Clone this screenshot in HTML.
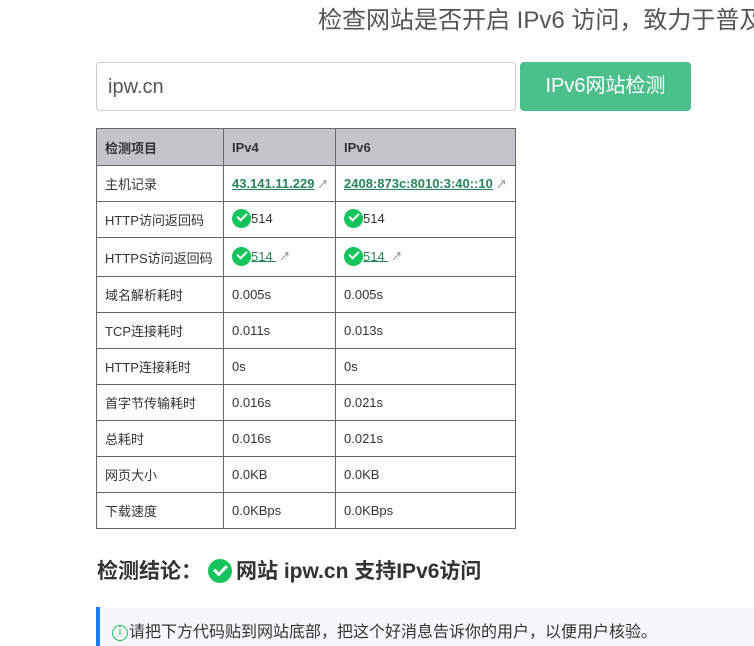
<!DOCTYPE html>
<html><head><meta charset="utf-8"><style>
*{margin:0;padding:0;box-sizing:border-box}
body{width:754px;height:646px;overflow:hidden;background:#fff;font-family:"Liberation Sans","Noto Sans CJK SC",sans-serif;color:#333;position:relative}
.title{position:absolute;left:318px;top:0px;font-size:24px;color:#555;white-space:nowrap}
.inp{position:absolute;left:96px;top:62px;width:420px;height:49px;border:1px solid #ccc;border-radius:4px;font-size:20px;color:#555;padding:13px 0 0 11px}
.btn{position:absolute;left:520px;top:62px;width:171px;height:49px;background:#4cc08a;border-radius:4px;color:#fff;font-size:20px;text-align:center;line-height:49px}
table{position:absolute;left:96px;top:128px;border-collapse:collapse;font-size:13px;color:#333;table-layout:fixed;width:419px}
td,th{border:1px solid #666;padding:0 8px;text-align:left;white-space:nowrap;overflow:hidden}
th{background:#c4c5c9;font-weight:bold;height:37px}
td{height:36px}
.c1{width:127px}.c2{width:112px}.c3{width:180px}
a{color:#27865a;text-decoration:underline;font-weight:bold}
.ar{color:#777;font-size:11px;margin-left:3px}
.ok{display:inline-block;width:19px;height:19px;border-radius:50%;background:#14c35b;vertical-align:middle;position:relative;top:-1px}
.ok:after{content:"";position:absolute;left:5px;top:4px;width:8px;height:4px;border-left:2.5px solid #fff;border-bottom:2.5px solid #fff;transform:rotate(-45deg)}
.concl{position:absolute;left:97px;top:555px;font-size:21px;font-weight:bold;color:#333;white-space:nowrap}
.concl .ok{width:24px;height:24px;margin:0 4px 0 6px}
.concl .ok:after{left:6px;top:6px;width:10px;height:5px;border-width:3px}
.info{position:absolute;left:96px;top:607px;width:658px;height:39px;background:#f6f7f9;border-left:4px solid #1e7cf2;font-size:16px;color:#333;padding:11px 0 0 12px;white-space:nowrap}
.ic{display:inline-block;width:16px;height:16px;border:1.5px solid #14c35b;border-radius:50%;color:#14c35b;font-size:11px;text-align:center;line-height:13px;vertical-align:middle;margin-right:1px}
</style></head><body>
<div class="title">检查网站是否开启 IPv6 访问，致力于普及</div>
<div class="inp">ipw.cn</div>
<div class="btn">IPv6网站检测</div>
<table>
<colgroup><col class="c1"><col class="c2"><col class="c3"></colgroup>
<tr><th>检测项目</th><th>IPv4</th><th>IPv6</th></tr>
<tr><td>主机记录</td><td><a>43.141.11.229</a><span class="ar">↗</span></td><td><a>2408:873c:8010:3:40::10</a><span class="ar">↗</span></td></tr>
<tr><td>HTTP访问返回码</td><td><span class="ok"></span>514</td><td><span class="ok"></span>514</td></tr>
<tr><td style="height:39px">HTTPS访问返回码</td><td><span class="ok"></span><a style="font-weight:normal">514&nbsp;</a><span class="ar">↗</span></td><td><span class="ok"></span><a style="font-weight:normal">514&nbsp;</a><span class="ar">↗</span></td></tr>
<tr><td>域名解析耗时</td><td>0.005s</td><td>0.005s</td></tr>
<tr><td>TCP连接耗时</td><td>0.011s</td><td>0.013s</td></tr>
<tr><td>HTTP连接耗时</td><td>0s</td><td>0s</td></tr>
<tr><td>首字节传输耗时</td><td>0.016s</td><td>0.021s</td></tr>
<tr><td>总耗时</td><td>0.016s</td><td>0.021s</td></tr>
<tr><td>网页大小</td><td>0.0KB</td><td>0.0KB</td></tr>
<tr><td>下载速度</td><td>0.0KBps</td><td>0.0KBps</td></tr>
</table>
<div class="concl">检测结论：<span class="ok"></span>网站 ipw.cn 支持IPv6访问</div>
<div class="info"><span class="ic">i</span>请把下方代码贴到网站底部，把这个好消息告诉你的用户，以便用户核验。</div>
</body></html>
